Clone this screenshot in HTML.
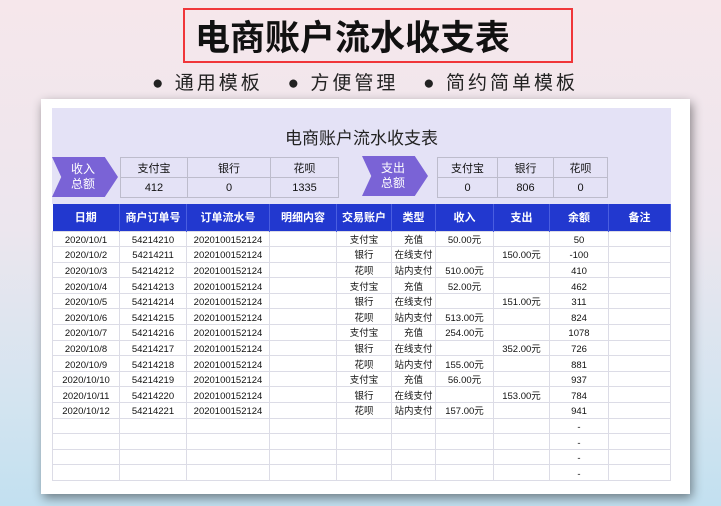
<!DOCTYPE html>
<html><head><meta charset="utf-8"><style>
*{margin:0;padding:0;box-sizing:border-box}
body{width:721px;height:506px;overflow:hidden;position:relative;background:linear-gradient(180deg,#f6e7eb 0%,#ece6ee 45%,#d3e4f0 80%,#c2e0f0 100%);font-family:"Liberation Sans","Noto Sans CJK SC",sans-serif;}
.abs{position:absolute}
.tbox{left:183px;top:8px;width:390px;height:55px;border:2px solid #f0363a}
.title{left:183px;top:8px;width:390px;height:55px;display:flex;align-items:center;padding-left:12px;font-size:35px;font-weight:bold;color:#111;letter-spacing:0px}
.sub{left:152px;top:68px;font-size:19px;color:#222;white-space:nowrap;letter-spacing:3px}
.card{left:41px;top:99px;width:649px;height:395px;background:#fff;box-shadow:2px 4px 10px rgba(0,0,0,.45)}
.panel{left:52px;top:108px;width:619px;height:96px;background:#e4e2f6}
.ptitle{left:52px;top:124px;width:619px;text-align:center;font-size:17px;color:#222}
.arrow{width:66px;height:40px;background:#7a63d6;clip-path:polygon(0 0,80% 0,100% 50%,80% 100%,0 100%,14% 50%);color:#fff;font-size:12px;line-height:15px;text-align:center;padding-top:5px;padding-right:4px}
table{border-collapse:collapse;table-layout:fixed}
.sum td{border:1px solid #bdbccc;text-align:center;font-size:11px;color:#111;height:20px}
.main{left:52px;top:204px}
.main th{background:#2238cf;color:#fff;font-weight:bold;font-size:11px;height:27px;border-right:1px solid #4a5ee0}
.main td{height:15.6px;font-size:9.5px;text-align:center;vertical-align:middle;border:1px solid #dcdce6;color:#111;padding:3px 0 0 0;line-height:11px;white-space:nowrap;overflow:hidden}
</style></head><body>
<div class="abs tbox"></div>
<div class="abs title">电商账户流水收支表</div>
<div class="abs sub">● 通用模板 &nbsp; ● 方便管理 &nbsp; ● 简约简单模板</div>
<div class="abs card"></div>
<div class="abs panel"></div>
<div class="abs ptitle">电商账户流水收支表</div>
<div class="abs arrow" style="left:52px;top:157px">收入<br>总额</div>
<div class="abs arrow" style="left:362px;top:156px">支出<br>总额</div>
<table class="abs sum" style="left:120px;top:157px;width:218px"><colgroup><col style="width:67px"><col style="width:83px"><col style="width:68px"></colgroup>
<tr><td>支付宝</td><td>银行</td><td>花呗</td></tr><tr><td>412</td><td>0</td><td>1335</td></tr></table>
<table class="abs sum" style="left:437px;top:157px;width:170px"><colgroup><col style="width:60px"><col style="width:56px"><col style="width:54px"></colgroup>
<tr><td>支付宝</td><td>银行</td><td>花呗</td></tr><tr><td>0</td><td>806</td><td>0</td></tr></table>
<table class="abs main" style="width:618px"><colgroup><col style="width:67px"><col style="width:67px"><col style="width:83px"><col style="width:67px"><col style="width:55px"><col style="width:44px"><col style="width:58px"><col style="width:56px"><col style="width:59px"><col style="width:62px"></colgroup>
<tr><th>日期</th><th>商户订单号</th><th>订单流水号</th><th>明细内容</th><th>交易账户</th><th>类型</th><th>收入</th><th>支出</th><th>余额</th><th>备注</th></tr>
<tr><td>2020/10/1</td><td>54214210</td><td>2020100152124</td><td></td><td>支付宝</td><td>充值</td><td>50.00元</td><td></td><td>50</td><td></td></tr>
<tr><td>2020/10/2</td><td>54214211</td><td>2020100152124</td><td></td><td>银行</td><td>在线支付</td><td></td><td>150.00元</td><td>-100</td><td></td></tr>
<tr><td>2020/10/3</td><td>54214212</td><td>2020100152124</td><td></td><td>花呗</td><td>站内支付</td><td>510.00元</td><td></td><td>410</td><td></td></tr>
<tr><td>2020/10/4</td><td>54214213</td><td>2020100152124</td><td></td><td>支付宝</td><td>充值</td><td>52.00元</td><td></td><td>462</td><td></td></tr>
<tr><td>2020/10/5</td><td>54214214</td><td>2020100152124</td><td></td><td>银行</td><td>在线支付</td><td></td><td>151.00元</td><td>311</td><td></td></tr>
<tr><td>2020/10/6</td><td>54214215</td><td>2020100152124</td><td></td><td>花呗</td><td>站内支付</td><td>513.00元</td><td></td><td>824</td><td></td></tr>
<tr><td>2020/10/7</td><td>54214216</td><td>2020100152124</td><td></td><td>支付宝</td><td>充值</td><td>254.00元</td><td></td><td>1078</td><td></td></tr>
<tr><td>2020/10/8</td><td>54214217</td><td>2020100152124</td><td></td><td>银行</td><td>在线支付</td><td></td><td>352.00元</td><td>726</td><td></td></tr>
<tr><td>2020/10/9</td><td>54214218</td><td>2020100152124</td><td></td><td>花呗</td><td>站内支付</td><td>155.00元</td><td></td><td>881</td><td></td></tr>
<tr><td>2020/10/10</td><td>54214219</td><td>2020100152124</td><td></td><td>支付宝</td><td>充值</td><td>56.00元</td><td></td><td>937</td><td></td></tr>
<tr><td>2020/10/11</td><td>54214220</td><td>2020100152124</td><td></td><td>银行</td><td>在线支付</td><td></td><td>153.00元</td><td>784</td><td></td></tr>
<tr><td>2020/10/12</td><td>54214221</td><td>2020100152124</td><td></td><td>花呗</td><td>站内支付</td><td>157.00元</td><td></td><td>941</td><td></td></tr>
<tr><td></td><td></td><td></td><td></td><td></td><td></td><td></td><td></td><td>-</td><td></td></tr>
<tr><td></td><td></td><td></td><td></td><td></td><td></td><td></td><td></td><td>-</td><td></td></tr>
<tr><td></td><td></td><td></td><td></td><td></td><td></td><td></td><td></td><td>-</td><td></td></tr>
<tr><td></td><td></td><td></td><td></td><td></td><td></td><td></td><td></td><td>-</td><td></td></tr>
</table>
</body></html>
